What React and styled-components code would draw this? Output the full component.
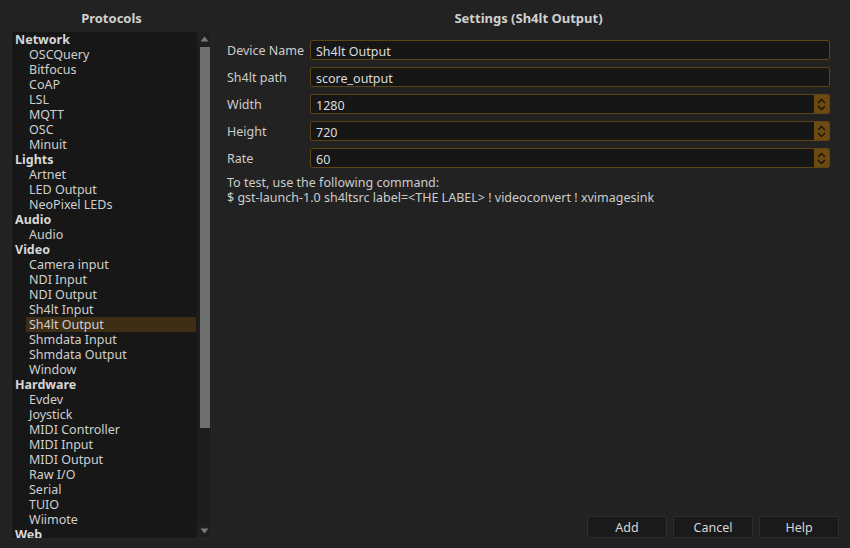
import React from 'react'
import styled, { createGlobalStyle } from 'styled-components'

const GlobalStyle = createGlobalStyle`
  html, body { margin: 0; padding: 0; background: #222222; }
  body { font-family: "Noto Sans", "Open Sans", sans-serif; font-size: 12.5px; color: #d2d2d2; }
`

const Window = styled.div`
  width: 850px;
  height: 548px;
  display: flex;
  background: #222222;
  overflow: hidden;
`

const LeftPane = styled.div`
  width: 201px;
  margin-left: 11px;
  display: flex;
  flex-direction: column;
`

const RightPane = styled.div`
  flex: 1;
  display: flex;
  flex-direction: column;
  padding: 0 20px 0 15px;
`

const Title = styled.div`
  height: 31px;
  line-height: 36px;
  text-align: center;
  font-weight: bold;
  font-size: 13px;
  color: #d0d0d0;
`

const ListBox = styled.div`
  height: 508px;
  display: flex;
  background: #171717;
  border: 1px solid #262626;
  box-sizing: border-box;
`

const ListItems = styled.div`
  flex: 1;
  overflow: hidden;
`

const Item = styled.div`
  height: 15px;
  line-height: 15px;
  margin-left: ${p => (p.$header ? '3px' : '14px')};
  margin-right: 1px;
  padding-left: ${p => (p.$header ? '0' : '3px')};
  font-weight: ${p => (p.$header ? 'bold' : 'normal')};
  color: ${p => (p.$header ? '#d6d6d6' : '#cfcfcf')};
  background: ${p => (p.$selected ? '#3e2e16' : 'transparent')};
  white-space: nowrap;
`

const ScrollBar = styled.div`
  width: 13px;
  display: flex;
  flex-direction: column;
  background: #1d1d1d;
  border-left: 1px solid #202020;
`

const ScrollArrow = styled.div`
  height: 14px;
  display: flex;
  align-items: center;
  justify-content: center;
  background: #1f1f1f;
`

const ScrollTrack = styled.div`
  flex: 1;
  display: flex;
  flex-direction: column;
`

const ScrollThumb = styled.div`
  height: 381px;
  margin: 1px 1px 0 2px;
  background: #6f6f6f;
`

const Form = styled.div`
  margin-top: 9px;
  display: flex;
  flex-direction: column;
  gap: 7px;
`

const Row = styled.div`
  display: flex;
  align-items: center;
  height: 20px;
`

const Label = styled.div`
  width: 83px;
  color: #cdcdcd;
  line-height: 20px;
  padding-top: 1px;
`

const Field = styled.div`
  flex: 1;
  height: 20px;
  display: flex;
  box-sizing: border-box;
  border: 1px solid #5e4315;
  border-radius: 2px;
  background: #161616;
  overflow: hidden;
`

const FieldText = styled.div`
  flex: 1;
  line-height: 19px;
  padding-top: 1px;
  padding-left: 5px;
  color: #dcdcdc;
`

const Spinner = styled.div`
  width: 15px;
  display: flex;
  align-items: center;
  justify-content: center;
  background: #6c4a10;
`

const Note = styled.div`
  margin-top: 7px;
  line-height: 15px;
  color: #cdcdcd;
`

const Spacer = styled.div`
  flex: 1;
`

const ButtonBar = styled.div`
  display: flex;
  justify-content: flex-end;
  gap: 6px;
  margin-bottom: 10px;
  margin-right: -9px;
`

const Button = styled.div`
  width: 80px;
  height: 22px;
  box-sizing: border-box;
  display: flex;
  align-items: center;
  justify-content: center;
  background: #1a1a1a;
  border: 1px solid #2e2e2e;
  border-radius: 2px;
  color: #d6d6d6;
`

const protocols = [
  ['Network', ['OSCQuery', 'Bitfocus', 'CoAP', 'LSL', 'MQTT', 'OSC', 'Minuit']],
  ['Lights', ['Artnet', 'LED Output', 'NeoPixel LEDs']],
  ['Audio', ['Audio']],
  ['Video', ['Camera input', 'NDI Input', 'NDI Output', 'Sh4lt Input', 'Sh4lt Output', 'Shmdata Input', 'Shmdata Output', 'Window']],
  ['Hardware', ['Evdev', 'Joystick', 'MIDI Controller', 'MIDI Input', 'MIDI Output', 'Raw I/O', 'Serial', 'TUIO', 'Wiimote']],
  ['Web', []],
]

const fields = [
  ['Device Name', 'Sh4lt Output', false],
  ['Sh4lt path', 'score_output', false],
  ['Width', '1280', true],
  ['Height', '720', true],
  ['Rate', '60', true],
]

const SpinIcon = () => (
  <svg width="11" height="15" viewBox="0 0 11 15">
    <path d="M2 6 L5.5 2.5 L9 6 M2 9 L5.5 12.5 L9 9" fill="none" stroke="#1a1206" strokeWidth="1.4" />
  </svg>
)

const Triangle = ({ up }) => (
  <svg width="9" height="6" viewBox="0 0 9 6">
    <path d={up ? 'M0.5 5.5 L4.5 0.5 L8.5 5.5 Z' : 'M0.5 0.5 L4.5 5.5 L8.5 0.5 Z'} fill="#7a7a7a" />
  </svg>
)

const App = () => {
  return (
    <Window>
      <GlobalStyle />
      <LeftPane>
        <Title>Protocols</Title>
        <ListBox>
          <ListItems>
            {protocols.map(([group, items]) => (
              <React.Fragment key={group}>
                <Item $header>{group}</Item>
                {items.map(name => (
                  <Item key={name} $selected={name === 'Sh4lt Output'}>{name}</Item>
                ))}
              </React.Fragment>
            ))}
          </ListItems>
          <ScrollBar>
            <ScrollArrow><Triangle up /></ScrollArrow>
            <ScrollTrack>
              <ScrollThumb />
            </ScrollTrack>
            <ScrollArrow><Triangle /></ScrollArrow>
          </ScrollBar>
        </ListBox>
      </LeftPane>

      <RightPane>
        <Title>Settings (Sh4lt Output)</Title>
        <Form>
          {fields.map(([label, value, spin]) => (
            <Row key={label}>
              <Label>{label}</Label>
              <Field>
                <FieldText>{value}</FieldText>
                {spin && <Spinner><SpinIcon /></Spinner>}
              </Field>
            </Row>
          ))}
        </Form>
        <Note>
          To test, use the following command:<br />
          $ gst-launch-1.0 sh4ltsrc label=&lt;THE LABEL&gt; ! videoconvert ! xvimagesink
        </Note>
        <Spacer />
        <ButtonBar>
          <Button>Add</Button>
          <Button>Cancel</Button>
          <Button>Help</Button>
        </ButtonBar>
      </RightPane>
    </Window>
  )
}

export default App
